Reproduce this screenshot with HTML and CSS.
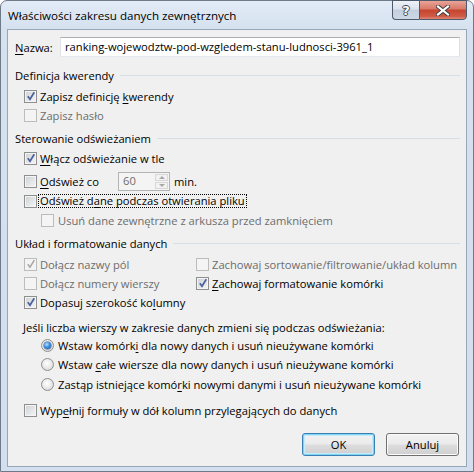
FILE: index.html
```html
<!DOCTYPE html>
<html lang="pl">
<head>
<meta charset="utf-8">
<title>Właściwości zakresu danych zewnętrznych</title>
<link rel="stylesheet" href="styles.css">
</head>
<body>
<div class="window">
  <div class="titlebar">
    <div class="title">Właściwości zakresu danych zewnętrznych</div>
    <div class="tbtn help">?</div>
    <div class="tbtn close">
      <svg width="14" height="11" viewBox="0 0 14 11"><path d="M2 1.5 L12 9.5 M12 1.5 L2 9.5" stroke="#3c3c3c" stroke-width="4" stroke-linecap="square" fill="none"/><path d="M2 1.5 L12 9.5 M12 1.5 L2 9.5" stroke="#ffffff" stroke-width="2.2" stroke-linecap="square" fill="none"/></svg>
    </div>
  </div>
  <div class="client">
    <div class="name-row">
      <span class="name-label"><u>N</u>azwa:</span>
      <div class="input">ranking-wojewodztw-pod-wzgledem-stanu-ludnosci-3961_1</div>
    </div>

    <div class="group g1"><span>Definicja kwerendy</span><i class="gline"></i></div>
    <div class="row r-def"><span class="cb on"></span><span>Zapisz definicję <u>k</u>werendy</span></div>
    <div class="row dis"><span class="cb"></span><span>Zapisz hasło</span></div>

    <div class="group g2"><span>Sterowanie odświeżaniem</span><i class="gline"></i></div>
    <div class="row r-bg"><span class="cb on"></span><span><u>W</u>łącz odświeżanie w tle</span></div>
    <div class="row r-every"><span class="cb"></span><span class="every-label"><u>O</u>dśwież co</span>
      <div class="spin"><span class="spin-val">60</span><span class="spin-btns"><i class="up"></i><i class="down"></i></span></div>
      <span class="min">min.</span>
    </div>
    <div class="row r-open"><span class="cb"></span><span class="focus">Odśwież d<u>a</u>ne podczas otwierania pliku</span></div>
    <div class="row sub dis"><span class="cb"></span><span>Usuń dane zewnętrzne z arkusza przed zamknięciem</span></div>

    <div class="group g3"><span>Układ i formatowanie danych</span><i class="gline"></i></div>
    <div class="grid">
      <div class="row dis"><span class="cb on"></span><span>Dołącz nazwy pól</span></div>
      <div class="row dis right"><span class="cb"></span><span>Zachowaj sortowanie/filtrowanie/układ kolumn</span></div>
      <div class="row dis"><span class="cb"></span><span>Dołącz numery wierszy</span></div>
      <div class="row right"><span class="cb on"></span><span><u>Z</u>achowaj formatowanie komórki</span></div>
      <div class="row"><span class="cb on"></span><span>Dopasuj szerokość ko<u>l</u>umny</span></div>
    </div>

    <div class="question">Jeśli liczba wierszy w zakresie danych zmieni się podczas odświeżania:</div>
    <div class="row sub radio-row"><span class="rb on"></span><span>Wstaw komórk<u>i</u> dla nowy danych i usuń nieużywane komórki</span></div>
    <div class="row sub radio-row"><span class="rb"></span><span>Wstaw <u>c</u>ałe wiersze dla nowy danych i usuń nieużywane komórki</span></div>
    <div class="row sub radio-row last"><span class="rb"></span><span>Zastąp istniejące komó<u>r</u>ki nowymi danymi i usuń nieużywane komórki</span></div>

    <div class="row r-fill"><span class="cb"></span><span>Wyp<u>e</u>łnij formuły w dół kolumn przylegających do danych</span></div>

    <div class="buttons">
      <div class="btn default">OK</div>
      <div class="btn">Anuluj</div>
    </div>
  </div>
</div>
</body>
</html>
```
FILE: styles.css
```css
* { box-sizing: border-box; }
html, body { margin: 0; padding: 0; }
body {
  width: 474px;
  height: 472px;
  background: #ffffff;
  font-family: "Open Sans", "Noto Sans", sans-serif;
  font-size: 11.2px;
  color: #000000;
}
u { text-decoration-thickness: 1px; text-underline-offset: 2px; }

.window {
  width: 474px;
  height: 472px;
  border: 1px solid #6f7a88;
  border-radius: 7px 7px 0 0;
  background: linear-gradient(#e2ebf6, #d5e1ef 30px, #d3dfee);
  padding: 0 6px 4px 6px;
  display: flex;
  flex-direction: column;
}

.titlebar {
  height: 28px;
  display: flex;
  align-items: flex-start;
}
.title {
  padding: 6px 0 0 1px;
  line-height: 17px;
  font-size: 11.6px;
  flex: 1;
}
.tbtn {
  margin-top: -1px;
  height: 20px;
  display: flex;
  align-items: center;
  justify-content: center;
  border: 1px solid #4d5a6c;
}
.help {
  width: 27px;
  border-right: none;
  border-radius: 0 0 0 4px;
  background: linear-gradient(#eef2f7, #dbe3ed 45%, #c3cfdd 50%, #cdd8e5);
  color: #ffffff;
  font-family: "DejaVu Sans", sans-serif;
  font-weight: bold;
  font-size: 13px;
  text-shadow: 1px 0 0 #3a4555, -1px 0 0 #3a4555, 0 1px 0 #3a4555, 0 -1px 0 #3a4555;
}
.close {
  width: 48px;
  border-radius: 0 0 4px 0;
  background: linear-gradient(#e9a497, #d77867 45%, #c6432f 50%, #cf5a45 85%, #df8a78);
}

.client {
  height: 438px;
  border: 1px solid #98a6b8;
  background: #f0f0f0;
  padding: 7px 6px 0 7px;
  display: flex;
  flex-direction: column;
}

.name-row {
  display: flex;
  align-items: center;
  height: 20px;
}
.name-label { width: 45px; }
.input {
  flex: 1;
  height: 20px;
  background: #ffffff;
  border: 1px solid #abadb3;
  border-color: #abadb3 #dbdfe6 #e3e9ef #e2e3ea;
  padding-left: 4px;
  line-height: 17px;
}

.group {
  height: 16px;
  display: flex;
  align-items: center;
  gap: 6px;
}
.g1 { margin-top: 10px; }
.g2 { margin-top: 5px; }
.g3 { margin-top: 5px; }
.gline {
  flex: 1;
  height: 1px;
  background: #d5dfe5;
  margin-top: 1px;
}

.row {
  height: 19px;
  display: flex;
  align-items: center;
  gap: 3px;
  padding-left: 9px;
  white-space: nowrap;
}
.row.dis { color: #6d6d6d; }
.r-def { margin-top: 4px; }
.r-bg { margin-top: 3px; }
.r-every { height: 20px; margin-top: 3px; }
.r-open { height: 20px; }
.sub { padding-left: 26px; gap: 4px; }
.r-fill { margin-top: 7px; }

.cb {
  width: 13px;
  height: 13px;
  flex: none;
  border: 1px solid #8e8f8f;
  background: linear-gradient(135deg, #cdd0d4, #f6f6f6);
  box-shadow: inset 0 0 0 1px #f4f4f4;
  position: relative;
}
.dis .cb {
  border-color: #bcbcbc;
  background: #f4f4f4;
  box-shadow: none;
}
.cb.on::after {
  content: "";
  position: absolute;
  left: 2px;
  top: 0px;
  width: 8px;
  height: 10px;
  background: no-repeat center / contain url("data:image/svg+xml;utf8,<svg xmlns='http://www.w3.org/2000/svg' viewBox='0 0 8 10'><path d='M0.8 5.2 L3 8.2 L7.3 1.2' stroke='%234a5f9c' stroke-width='1.7' fill='none'/></svg>");
}
.dis .cb.on::after {
  background-image: url("data:image/svg+xml;utf8,<svg xmlns='http://www.w3.org/2000/svg' viewBox='0 0 8 10'><path d='M0.8 5.2 L3 8.2 L7.3 1.2' stroke='%23a6a6a6' stroke-width='1.5' fill='none'/></svg>");
}

.every-label { width: 75px; }
.spin {
  width: 52px;
  height: 19px;
  border: 1px solid #b4b4b4;
  background: #f4f4f4;
  display: flex;
}
.spin-val {
  flex: 1;
  color: #6d6d6d;
  padding-left: 4px;
  line-height: 16px;
}
.spin-btns {
  width: 15px;
  display: flex;
  flex-direction: column;
  padding: 1px;
  gap: 1px;
}
.spin-btns i {
  flex: 1;
  border: 1px solid #d8d8d8;
  background: #f2f2f2;
  display: flex;
  align-items: center;
  justify-content: center;
}
.spin-btns i::after {
  content: "";
  width: 0;
  height: 0;
  border-left: 3px solid transparent;
  border-right: 3px solid transparent;
}
.spin-btns .up::after { border-bottom: 3px solid #a8a8a8; }
.spin-btns .down::after { border-top: 3px solid #a8a8a8; }
.min { margin-left: 1px; }

.focus {
  border: 1px dotted #000000;
  padding: 0 1px;
  margin-left: -2px;
  line-height: 12px;
}

.grid {
  display: grid;
  grid-template-columns: 181px 1fr;
  margin-top: 4px;
}
.row.right { padding-left: 0; }

.question {
  margin-top: 8px;
  height: 16px;
  line-height: 16px;
  padding-left: 8px;
}
.radio-row.last { height: 20px; }

.rb {
  width: 13px;
  height: 13px;
  flex: none;
  border-radius: 50%;
  border: 1px solid #8e8f8f;
  background: radial-gradient(circle at 45% 40%, #ffffff 0, #ececec 45%, #cdcdcd 100%);
  position: relative;
}
.rb.on::after {
  content: "";
  position: absolute;
  left: 2px;
  top: 2px;
  width: 7px;
  height: 7px;
  border-radius: 50%;
  background: radial-gradient(circle at 40% 35%, #b6e4ff 0, #3d8ee0 45%, #134f97 100%);
  box-shadow: 0 0 0 0.5px #2b4f7e;
}

.buttons {
  margin-top: 13px;
  display: flex;
  justify-content: flex-end;
  gap: 11px;
  padding-right: 1px;
}
.btn {
  width: 73px;
  height: 23px;
  border: 1px solid #707070;
  border-radius: 3px;
  background: linear-gradient(#f2f2f2, #ebebeb 48%, #dddddd 52%, #cfcfcf);
  box-shadow: inset 0 0 0 1px #fbfbfb;
  display: flex;
  align-items: center;
  justify-content: center;
}
.btn.default {
  border-color: #3c7fb1;
  box-shadow: inset 0 0 0 1px #7fd3f5, inset 0 0 0 2px #c6ecfb;
}
```
